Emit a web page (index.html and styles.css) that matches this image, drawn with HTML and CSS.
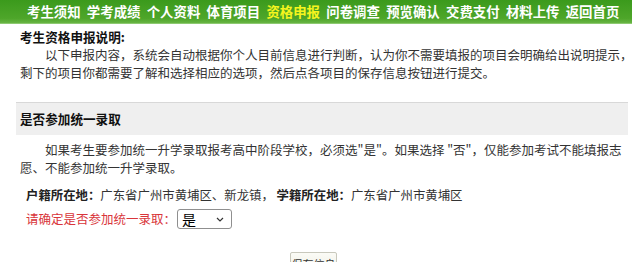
FILE: index.html
```html
<!DOCTYPE html>
<html lang="zh-CN">
<head>
<meta charset="utf-8">
<title>资格申报</title>
<link rel="stylesheet" href="styles.css">
</head>
<body>
<nav class="nav">
  <a class="nav-item">考生须知</a>
  <a class="nav-item">学考成绩</a>
  <a class="nav-item">个人资料</a>
  <a class="nav-item">体育项目</a>
  <a class="nav-item active">资格申报</a>
  <a class="nav-item">问卷调查</a>
  <a class="nav-item">预览确认</a>
  <a class="nav-item">交费支付</a>
  <a class="nav-item">材料上传</a>
  <a class="nav-item">返回首页</a>
</nav>
<main class="main">
  <h2 class="intro-title">考生资格申报说明:</h2>
  <p class="para">以下申报内容，系统会自动根据你个人目前信息进行判断，认为你不需要填报的项目会明确给出说明提示，<br>剩下的项目你都需要了解和选择相应的选项，然后点各项目的保存信息按钮进行提交。</p>

  <section class="block">
    <h3 class="block-title">是否参加统一录取</h3>
    <p class="para">如果考生要参加统一升学录取报考高中阶段学校，必须选"是"。如果选择 "否"，仅能参加考试不能填报志<br>愿、不能参加统一升学录取。</p>
    <div class="info"><b>户籍所在地：</b>广东省广州市黄埔区、新龙镇， <b>学籍所在地：</b>广东省广州市黄埔区</div>
    <div class="choose">
      <label class="choose-label" for="tongyi">请确定是否参加统一录取：</label>
      <span class="select-wrap">
        <select id="tongyi" class="select">
          <option>是</option>
          <option>否</option>
        </select>
        <svg class="chev" width="8" height="5" viewBox="0 0 8 5"><path d="M1 1 L4 4 L7 1" fill="none" stroke="#333" stroke-width="1.2"/></svg>
      </span>
    </div>
    <div class="actions">
      <button class="save" type="button">保存信息</button>
    </div>
  </section>
</main>
</body>
</html>
```
FILE: styles.css
```css
html, body {
  margin: 0;
  padding: 0;
  background: #fff;
}
body {
  font-family: "Noto Sans CJK SC", "Liberation Sans", sans-serif;
  color: #333;
  overflow: hidden;
}
.nav {
  width: 605px;
  height: 23px;
  padding-left: 27px;
  display: flex;
  align-items: center;
  gap: 6.3px;
  background: linear-gradient(#3b9a1c, #4ea62a 80%, #67b443);
  border-bottom: 1px solid #8cc970;
  box-sizing: content-box;
}
.nav-item {
  color: #fff;
  font-weight: bold;
  font-size: 13.4px;
  line-height: 23px;
  white-space: nowrap;
}
.nav-item.active {
  color: #f5f51e;
}
.main {
  padding-left: 16px;
  width: 612px;
}
.intro-title {
  margin: 4px 0 0 4px;
  font-size: 12.6px;
  line-height: 18px;
  font-weight: bold;
  color: #111;
}
.para {
  margin: 0 0 0 4px;
  font-size: 12.5px;
  line-height: 18px;
  text-indent: 2em;
  white-space: nowrap;
  color: #333;
}
.block {
  margin-top: 20px;
}
.block-title {
  margin: 0 0 6px 0;
  padding-left: 4px;
  border-top: 1px solid #d8d8d8;
  background: #efefef;
  font-size: 12.6px;
  line-height: 32px;
  font-weight: bold;
  color: #111;
}
.info {
  margin: 9px 0 0 10px;
  font-size: 12.4px;
  line-height: 18px;
  white-space: nowrap;
  color: #333;
}
.info b {
  color: #222;
}
.choose {
  margin: 5px 0 0 10px;
  display: flex;
  align-items: center;
  height: 20px;
}
.choose-label {
  color: #d9353a;
  font-size: 12.5px;
  line-height: 20px;
  white-space: nowrap;
}
.select-wrap {
  position: relative;
  margin-left: 1px;
  display: inline-flex;
}
.select {
  appearance: none;
  -webkit-appearance: none;
  width: 55px;
  height: 20px;
  padding: 0 0 0 4px;
  border: 1px solid #8f8f8f;
  border-radius: 3px;
  background: #fff;
  font-family: "Noto Sans CJK SC", sans-serif;
  font-size: 14px;
  line-height: 18px;
  color: #000;
}
.chev {
  position: absolute;
  right: 8px;
  top: 8px;
  pointer-events: none;
}
.actions {
  margin: 21px 0 0 274px;
}
.save {
  width: 47px;
  height: 24px;
  padding: 0;
  border: 1px solid #c8c8bc;
  border-radius: 2px;
  background: linear-gradient(#fbfbf6, #ecece2);
  font-family: "Noto Sans CJK SC", sans-serif;
  font-size: 11px;
  color: #333;
  white-space: nowrap;
}
```
